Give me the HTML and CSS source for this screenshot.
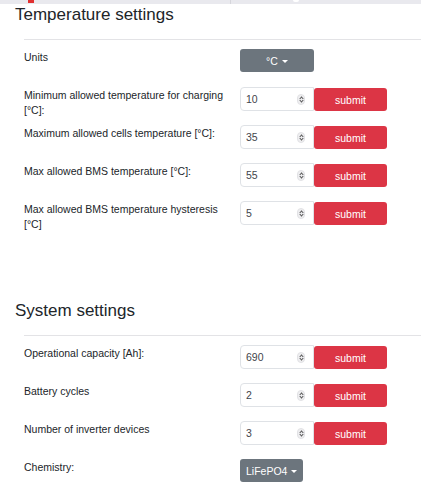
FILE: index.html
```html
<!DOCTYPE html>
<html lang="en">
<head>
  <meta charset="UTF-8">
  <meta name="viewport" content="width=device-width, initial-scale=1.0">
  <title>BMS settings</title>
  <link rel="stylesheet" href="styles.css">
</head>
<body>
  <div class="tabbar">
    <div class="tab tab-first"><span class="tab-icon"></span></div>
    <div class="tab"><span class="tab-dot"></span></div>
  </div>

  <section class="settings">
    <h2>Temperature settings</h2>
    <hr>
    <div class="form">
      <div class="row">
        <label>Units</label>
        <div class="controls">
          <button class="dropdown-btn units-btn">°C</button>
        </div>
      </div>
      <div class="row">
        <label for="minCharge">Minimum allowed temperature for charging [°C]:</label>
        <div class="controls">
          <div class="num-input"><input id="minCharge" type="text" value="10"><span class="spin"></span></div>
          <button class="submit-btn">submit</button>
        </div>
      </div>
      <div class="row">
        <label for="maxCells">Maximum allowed cells temperature [°C]:</label>
        <div class="controls">
          <div class="num-input"><input id="maxCells" type="text" value="35"><span class="spin"></span></div>
          <button class="submit-btn">submit</button>
        </div>
      </div>
      <div class="row">
        <label for="maxBms">Max allowed BMS temperature [°C]:</label>
        <div class="controls">
          <div class="num-input"><input id="maxBms" type="text" value="55"><span class="spin"></span></div>
          <button class="submit-btn">submit</button>
        </div>
      </div>
      <div class="row">
        <label for="hyst">Max allowed BMS temperature hysteresis [°C]</label>
        <div class="controls">
          <div class="num-input"><input id="hyst" type="text" value="5"><span class="spin"></span></div>
          <button class="submit-btn">submit</button>
        </div>
      </div>
    </div>
  </section>

  <section class="settings system">
    <h2>System settings</h2>
    <hr>
    <div class="form">
      <div class="row">
        <label for="capacity">Operational capacity [Ah]:</label>
        <div class="controls">
          <div class="num-input"><input id="capacity" type="text" value="690"><span class="spin"></span></div>
          <button class="submit-btn">submit</button>
        </div>
      </div>
      <div class="row">
        <label for="cycles">Battery cycles</label>
        <div class="controls">
          <div class="num-input"><input id="cycles" type="text" value="2"><span class="spin"></span></div>
          <button class="submit-btn">submit</button>
        </div>
      </div>
      <div class="row">
        <label for="inverters">Number of inverter devices</label>
        <div class="controls">
          <div class="num-input"><input id="inverters" type="text" value="3"><span class="spin"></span></div>
          <button class="submit-btn">submit</button>
        </div>
      </div>
      <div class="row">
        <label>Chemistry:</label>
        <div class="controls">
          <button class="dropdown-btn">LiFePO4</button>
        </div>
      </div>
    </div>
  </section>
</body>
</html>
```
FILE: styles.css
```css
* {
  box-sizing: border-box;
}

body {
  margin: 0;
  font-family: 'Liberation Sans', Arial, sans-serif;
  color: #212529;
  background: #fff;
  overflow-x: hidden;
}

.tabbar {
  display: flex;
  height: 4px;
  background: #e9e9ee;
}

.tab {
  position: relative;
  flex: 1;
}

.tab-first {
  flex: 0 0 231px;
  border-right: 1px solid #d6d6dc;
}

.tab-icon {
  position: absolute;
  left: 28px;
  top: 0;
  width: 6px;
  height: 3px;
  background: #e03030;
}

.tab-dot {
  position: absolute;
  left: 62px;
  top: 0;
  width: 6px;
  height: 2px;
  border-radius: 0 0 3px 3px;
  background: #fff;
}

.settings h2 {
  margin: 1px 0 0;
  padding-left: 15px;
  font-size: 17px;
  line-height: 20px;
  font-weight: 400;
}

.settings hr {
  margin: 14px 0 0 24px;
  border: none;
  border-top: 1px solid #e3e3e6;
}

.system {
  margin-top: 62px;
}

.form {
  padding: 9px 0 0 24px;
}

.row {
  display: grid;
  grid-template-columns: 216px auto;
  height: 38px;
  align-items: start;
}

.row label {
  font-size: 10.5px;
  line-height: 15px;
  padding-top: 1px;
  padding-right: 12px;
}

.controls {
  display: flex;
}

.num-input {
  display: flex;
  align-items: center;
  width: 74px;
  height: 24px;
  border: 1px solid #dfe2e6;
  border-radius: 4px 0 0 4px;
  background: #fff;
}

.num-input input {
  width: 50px;
  border: none;
  outline: none;
  padding: 0 0 0 5px;
  font-family: inherit;
  font-size: 10.5px;
  color: #3f454b;
  background: transparent;
}

.spin {
  position: relative;
  margin-left: auto;
  margin-right: 8px;
  width: 8px;
  height: 11px;
  border-radius: 4px;
  background: #eeeef0;
  border: 1px solid #e2e2e5;
}

.spin::before,
.spin::after {
  content: '';
  position: absolute;
  left: 1.5px;
  width: 2px;
  height: 2px;
  border-left: 1px solid #555;
  border-top: 1px solid #555;
}

.spin::before {
  top: 2px;
  transform: rotate(45deg);
}

.spin::after {
  bottom: 2px;
  transform: rotate(225deg);
}

.submit-btn {
  width: 73px;
  height: 23px;
  margin-top: 1px;
  border: none;
  border-radius: 3px;
  background: #dc3545;
  color: #fff;
  font-family: inherit;
  font-size: 10.5px;
  padding: 0;
  cursor: pointer;
}

.dropdown-btn {
  height: 23px;
  padding: 0 6px;
  border: none;
  border-radius: 3px;
  background: #6c757d;
  color: #fff;
  font-family: inherit;
  font-size: 10.5px;
  cursor: pointer;
}

.dropdown-btn::after {
  content: '';
  display: inline-block;
  margin-left: 4px;
  vertical-align: 2px;
  border-top: 3px solid #fff;
  border-left: 3px solid transparent;
  border-right: 3px solid transparent;
}

.units-btn {
  width: 74px;
}
```
